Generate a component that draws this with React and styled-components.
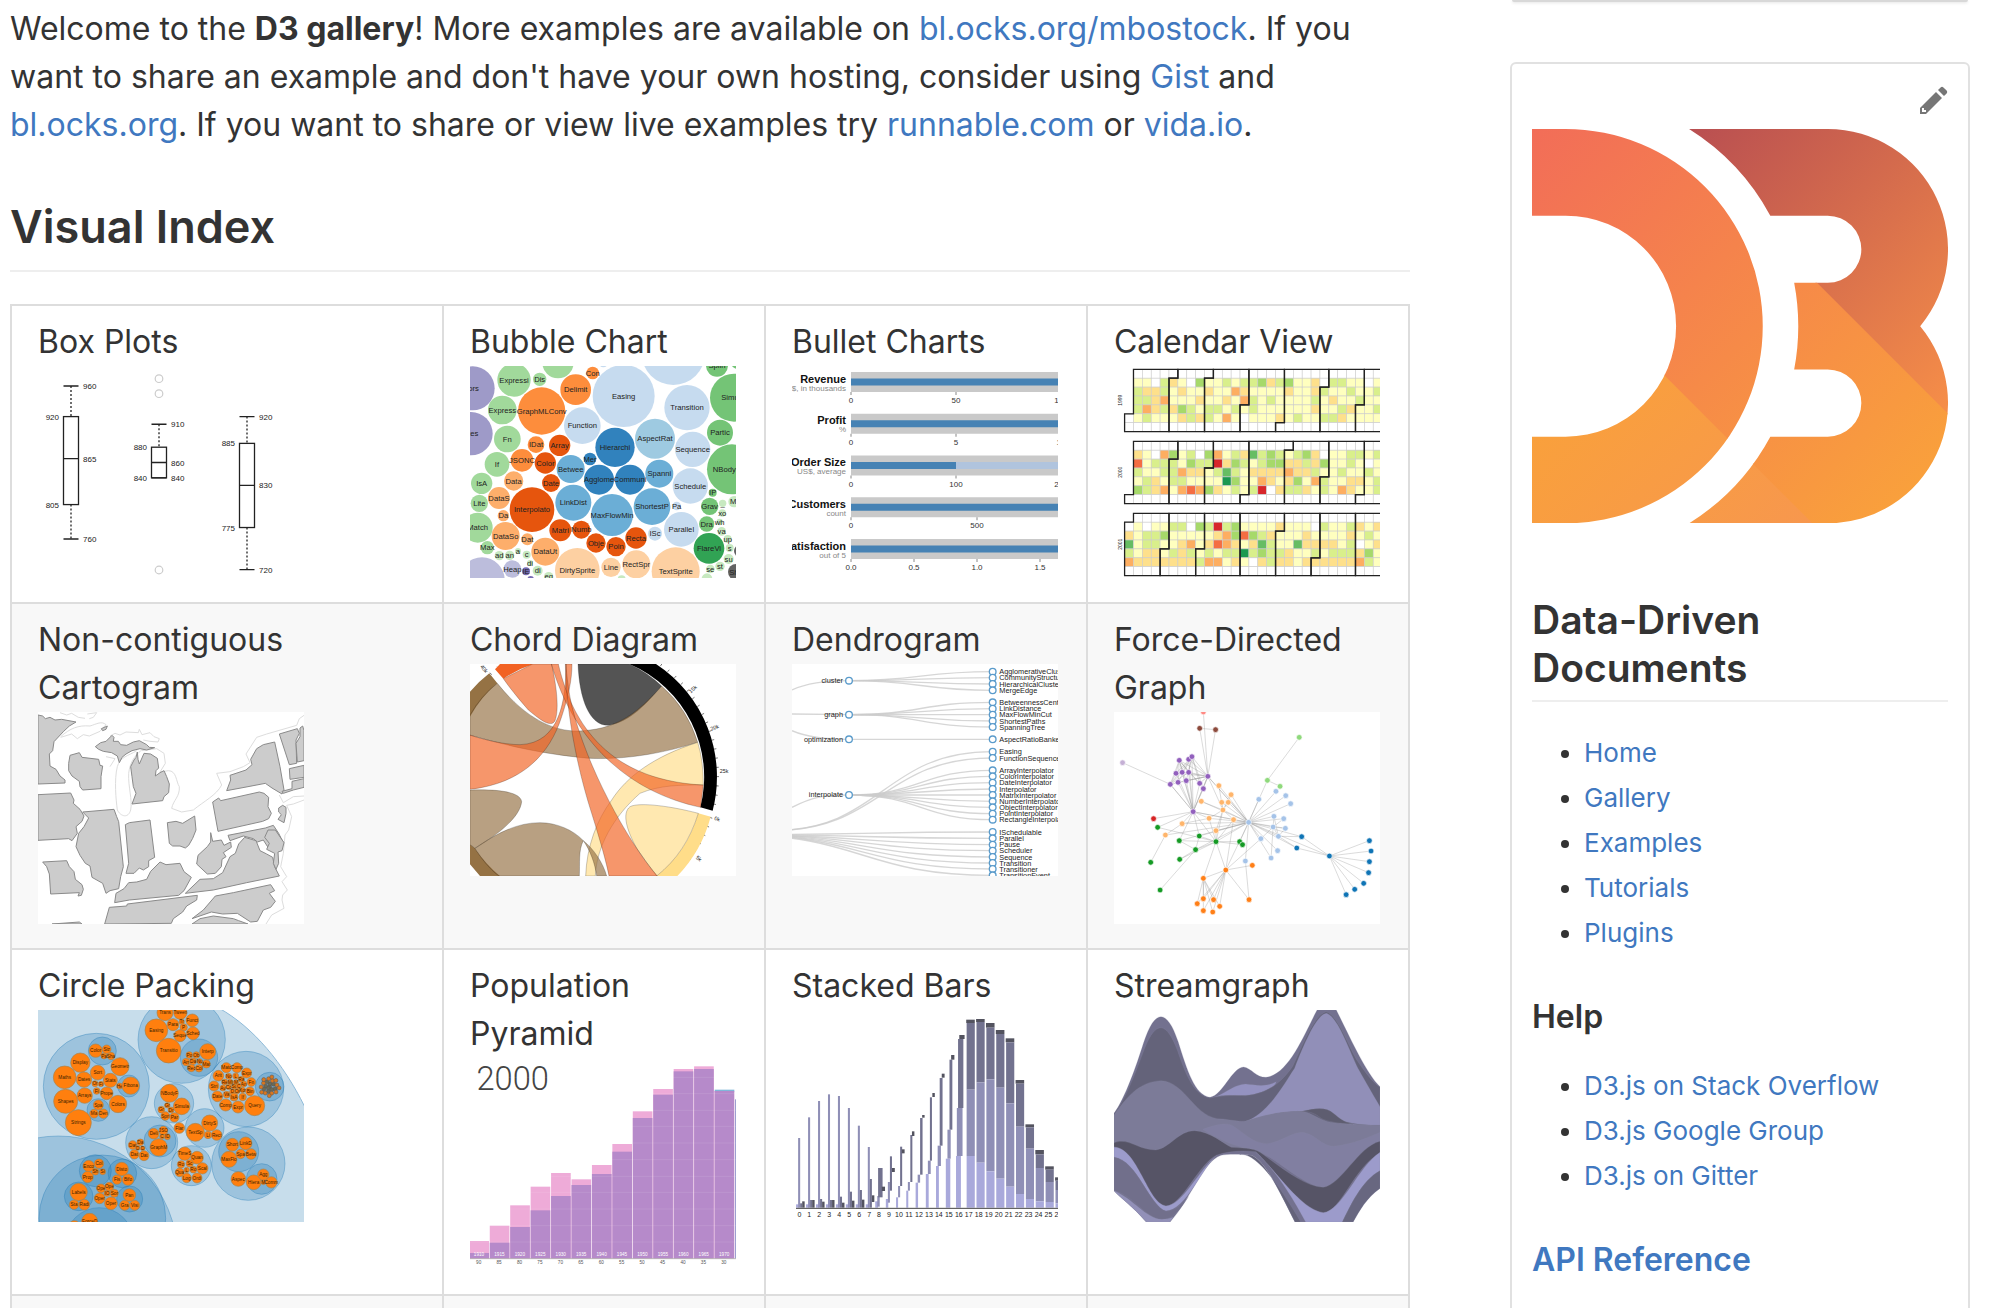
import React from "react";
import styled, { createGlobalStyle } from "styled-components";

const GlobalStyle = createGlobalStyle`
  *, *::before, *::after { box-sizing: border-box; }
  body {
    margin: 0;
    background: #fff;
    color: #333;
    font-family: Inter, "Liberation Sans", sans-serif;
    font-size: 32px;
    line-height: 48px;
  }
`;

/* ---------- layout ---------- */

const Page = styled.div`
  display: grid;
  grid-template-columns: minmax(0, 1fr) 460px;
  column-gap: 100px;
  height: 100vh;
  padding: 0 20px 0 10px;
  overflow: hidden;
`;

const Main = styled.main`
  padding-top: 5px;
`;

const Intro = styled.p`
  margin: 0 0 48px;
`;

const Link = styled.a`
  color: #4078c0;
  text-decoration: none;
  &:hover { text-decoration: underline; }
`;

const SectionTitle = styled.h2`
  margin: 0 0 32px;
  padding-bottom: 13px;
  border-bottom: 2px solid #eee;
  font-size: 45px;
  font-weight: 600;
  line-height: 60px;
`;

const Table = styled.table`
  width: 100%;
  table-layout: fixed;
  border-collapse: collapse;
`;

const Row = styled.tr`
  background: #fff;
  &:nth-child(even) { background: #f8f8f8; }
`;

const Cell = styled.td`
  padding: 12px 26px;
  border: 2px solid #ddd;
  vertical-align: top;
  height: 48px;
`;

const FirstCol = styled.col`
  width: 30.9%;
`;

const Entry = styled.div`
  width: 266px;
`;

const ThumbLink = styled.a`
  display: block;
  margin-bottom: 12px;
`;

const Thumb = styled.svg`
  display: block;
  width: 266px;
  height: 212px;
  background: #fff;
  overflow: hidden;
  font-family: "Liberation Sans", Arial, sans-serif;
`;

const Aside = styled.aside`
  display: flex;
  flex-direction: column;
  gap: 60px;
`;

const PagesBoxEdge = styled.div`
  flex: none;
  height: 2px;
  margin: 0 2px;
  background: #d8d8d8;
  border-radius: 0 0 4px 4px;
  box-shadow: 0 1px 3px rgba(0, 0, 0, 0.12);
`;

const SideBox = styled.section`
  flex: none;
  padding: 20px 20px 60px;
  border: 2px solid #e1e1e1;
  border-radius: 6px;
`;

const EditLink = styled.a`
  display: flex;
  justify-content: flex-end;
  margin-bottom: 13px;
  color: #767676;
`;

const Logo = styled.svg`
  display: block;
  width: 100%;
  margin-bottom: 73px;
`;

const SideTitle = styled.h2`
  margin: 0 0 28px;
  padding-bottom: 8px;
  border-bottom: 2px solid #eee;
  font-size: 39px;
  font-weight: 600;
  line-height: 48px;
`;

const SideHeading = styled.h3`
  margin: 38px 0 22px;
  font-size: 32px;
  font-weight: 600;
  line-height: 48px;
`;

const SideList = styled.ul`
  margin: 0;
  padding-left: 52px;
  font-size: 26px;
  line-height: 45px;
`;

/* ---------- thumbnails ---------- */

function BoxPlots() {
  const y = (v) => 20 + (960 - v) * 0.765;
  const boxes = [
    { x: 33, hi: 960, q3: 920, med: 865, q1: 805, lo: 760, out: [] },
    { x: 121, hi: 910, q3: 880, med: 860, q1: 840, lo: 840, out: [12.7, 27.7, 204] },
    { x: 209, hi: 920, q3: 885, med: 830, q1: 775, lo: 720, out: [] },
  ];
  return (
    <Thumb viewBox="0 0 266 212" fontSize="8" fill="#222">
      {boxes.map((b) => (
        <g key={b.x}>
          <g stroke="#222" strokeWidth="1.3" fill="none">
            <path d={`M${b.x},${y(b.hi)}V${y(b.q3)}M${b.x},${y(b.q1)}V${y(b.lo)}`} strokeDasharray="2 2" />
            <path d={`M${b.x - 7.5},${y(b.hi)}h15M${b.x - 7.5},${y(b.lo)}h15M${b.x - 7.5},${y(b.med)}h15`} />
            <rect x={b.x - 7.5} y={y(b.q3)} width="15" height={y(b.q1) - y(b.q3)} />
          </g>
          {b.out.map((o) => (
            <circle key={o} cx={b.x} cy={o} r="3.8" fill="none" stroke="#ccc" strokeWidth="1.2" />
          ))}
          {[b.hi, b.med, b.lo].map((v) => (
            <text key={v} x={b.x + 12} y={y(v) + 3}>{v}</text>
          ))}
          {[b.q3, b.q1].map((v) => (
            <text key={v} x={b.x - 12} y={y(v) + 3} textAnchor="end">{v}</text>
          ))}
        </g>
      ))}
    </Thumb>
  );
}

const BUBBLES = {
  "#9e9ac8": [[38, 85, 66, "lors"], [33, 221, 65, "utes"]],
  "#a1d99b": [[162, 60, 50, "Expressi"], [239, 58, 20, "Dis"], [294, 8, 47, ""], [127, 150, 43, "Express"], [142, 237, 40, "Fn"], [111, 313, 37, "If"], [65, 370, 32, "IsA"], [58, 430, 26, "Lite"], [53, 503, 45, "Match"], [82, 563, 20, "Max"]],
  "#c7e9c0": [[118, 587, 14, "ad"], [149, 586, 14, "an"], [174, 573, 9, "a"], [200, 584, 12, "c"], [210, 609, 9, "di"], [233, 632, 15, "di"], [266, 650, 14, "eq"], [485, 658, 12, ""], [822, 425, 17, "Mi"], [788, 430, 11, "_"], [787, 459, 11, "xo"], [779, 486, 10, "wh"], [785, 514, 13, "va"], [803, 537, 12, "up"], [809, 564, 12, "s"], [806, 597, 15, "su"], [780, 619, 14, "st"], [751, 627, 13, "se"], [741, 656, 16, ""]],
  "#fd8d3c": [[245, 153, 71, "GraphMLConv"], [347, 89, 46, "Delimit"], [398, 39, 19, "Con"], [228, 254, 25, "IDat"], [186, 301, 34, "JSONC"]],
  "#e6550d": [[299, 256, 32, "Array"], [256, 309, 32, "Color"], [273, 369, 27, "Date"], [216, 449, 67, "Interpolato"], [301, 511, 33, "Matri"], [364, 509, 27, "Numb"], [408, 549, 29, "Obje"], [468, 560, 29, "Poin"], [528, 534, 32, "Recta"]],
  "#fdae6b": [[161, 363, 29, "Data"], [117, 414, 33, "DataS"], [130, 467, 17, "Da"], [137, 528, 42, "DataSo"], [202, 538, 18, "Dat"], [256, 575, 42, "DataUt"]],
  "#fdd0a2": [[352, 631, 67, "DirtySprite"], [453, 622, 29, "Line"], [529, 613, 42, "RectSpr"], [647, 634, 72, "TextSprite"]],
  "#c6dbef": [[491, 108, 93, "Easing"], [640, -20, 95, ""], [430, 8, 14, ""], [367, 197, 55, "Function"], [681, 143, 68, "Transition"], [698, 268, 53, "Sequence"], [691, 378, 53, "Schedule"], [650, 438, 13, "Pa"], [664, 508, 52, "Parallel"], [585, 521, 21, "ISc"]],
  "#9ecae1": [[585, 236, 60, "AspectRat"]],
  "#3182bd": [[465, 262, 59, "Hierarchi"], [390, 297, 19, "Mer"], [417, 359, 45, "Agglome"], [510, 359, 45, "Communi"]],
  "#6baed6": [[332, 327, 42, "Betwee"], [340, 428, 54, "LinkDist"], [456, 465, 63, "MaxFlowMin"], [598, 341, 42, "Spanni"], [576, 440, 55, "ShortestP"]],
  "#74c476": [[771, 17, 33, "Splin"], [822, 113, 72, "Simulat"], [830, 10, 16, ""], [780, 218, 39, "Partic"], [816, 328, 75, "NBodyForc"], [758, 398, 12, "IP"], [749, 439, 26, "Grav"], [740, 492, 23, "Dra"]],
  "#31a354": [[747, 565, 46, "FlareVi"]],
  "#bcbddc": [[66, 660, 68, ""], [157, 627, 26, "Heap"]],
  "#756bb1": [[198, 634, 12, "IE"], [212, 658, 10, ""]],
  "#636363": [[840, 573, 18, ""], [828, 636, 24, "Sha"]],
};

function BubbleChart() {
  return (
    <Thumb viewBox="30 18 798 636" fontSize="23" textAnchor="middle">
      {Object.entries(BUBBLES).map(([color, list]) =>
        list.map(([x, y, r, label]) => (
          <g key={`${x},${y}`}>
            <circle cx={x} cy={y} r={r} fill={color} />
            {label && <text x={x} y={y + 8} fill="#222">{label}</text>}
          </g>
        ))
      )}
    </Thumb>
  );
}

function BulletCharts() {
  const rows = [
    { title: "Revenue", sub: "US$, in thousands", ticks: [["0", 59], ["50", 164], ["100", 269]] },
    { title: "Profit", sub: "%", ticks: [["0", 59], ["5", 164], ["10", 269]] },
    { title: "Order Size", sub: "US$, average", split: 164, ticks: [["0", 59], ["100", 164], ["200", 269]] },
    { title: "Customers", sub: "count", ticks: [["0", 59], ["500", 185]] },
    { title: "Satisfaction", sub: "out of 5", ticks: [["0.0", 59], ["0.5", 122], ["1.0", 185], ["1.5", 248]] },
  ];
  return (
    <Thumb viewBox="0 0 266 212" fontSize="8">
      {rows.map((r, i) => (
        <g key={r.title} transform={`translate(0 ${6 + i * 41.75})`}>
          <rect x="59" width="210" height="20" fill="#c9c9c9" />
          <rect x="59" y="6.5" width="210" height="7" fill={r.split ? "#b0c4de" : "#4682b4"} />
          {r.split && <rect x="59" y="6.5" width={r.split - 59} height="7" fill="#4682b4" />}
          <text x="54" y="10.5" fontSize="11" fontWeight="bold" textAnchor="end" fill="#111">{r.title}</text>
          <text x="54" y="18.5" textAnchor="end" fill="#888">{r.sub}</text>
          {r.ticks.map(([t, x]) => (
            <g key={t}>
              <path d={`M${x},20v3`} stroke="#888" />
              <text x={x} y="31" textAnchor="middle" fill="#333">{t}</text>
            </g>
          ))}
        </g>
      ))}
    </Thumb>
  );
}

const HEAT = { y: "#ffffbf", l: "#d9ef8b", g: "#a6d96a", G: "#66bd63", D: "#1a9850", o: "#fee08b", f: "#fdae61", r: "#f46d43", R: "#d7262a", w: "#fff" };

const CALENDAR = [
  { year: 1999, top: 3.3, days: ["-yywloywgyylyllgolgyyowllyywy", "-loolyoyyoyyfoyyyyoyyolyylyyl", "-llofyyyoyyoyflylyyyylyoyylyy", "-lfologlyllylylyyyyyyoyyloyyl", "wylyyyololyfywyyyoylyylloyyyy"] },
  { year: 2000, top: 75.3, days: ["-oywfgylwgfyloGlglylgowyyllyl", "-rylllygllRoglylggoologyylywy", "-lyyllfooylGlyoooofoolyylyyly", "-yloyllyyyyDgyyfoyogyflyyooyl", "-glofyfrfgoylylRwolloylyfoyyl"] },
  { year: 2001, top: 147.3, days: ["wywyyllwglRlgyyyyoyyywlyyloyo", "oyllgyyyyyofgrgloyyyoyyyyoyly", "GyllyyofyorfoyoGlyyGooooylwyo", "lyooylolylyllDlglloyylylllogy", "fooooooolffyoywolooyoooooofly"] },
];

function monthOutline(year, month, w, h) {
  const jan1 = new Date(Date.UTC(year, 0, 1));
  const place = (d) => {
    const n = Math.round((d - jan1) / 864e5) + jan1.getUTCDay();
    return [Math.floor(n / 7), n % 7];
  };
  const [w0, d0] = place(new Date(Date.UTC(year, month, 1)));
  const [w1, d1] = place(new Date(Date.UTC(year, month + 1, 0)));
  return `M${(w0 + 1) * w},${d0 * h}H${w0 * w}V${7 * h}H${w1 * w}V${(d1 + 1) * h}H${(w1 + 1) * w}V0H${(w0 + 1) * w}Z`;
}

function CalendarView() {
  const w = 8.88;
  const h = 8.9;
  return (
    <Thumb viewBox="0 0 266 212">
      {CALENDAR.map(({ year, top, days }) => {
        const first = new Date(Date.UTC(year, 0, 1)).getUTCDay();
        return (
          <g key={year} transform={`translate(10.6 ${top})`}>
            {Array.from({ length: 29 * 7 }, (_, n) => {
              const c = Math.floor(n / 7);
              const d = n % 7;
              if (n < first) return null;
              const code = d > 0 && d < 6 ? days[d - 1][c] : "w";
              return <rect key={n} x={c * w} y={d * h} width={w} height={h} fill={HEAT[code] || "#fff"} stroke="#ccc" strokeWidth="0.6" />;
            })}
            {[0, 1, 2, 3, 4, 5, 6].map((m) => (
              <path key={m} d={monthOutline(year, m, w, h)} fill="none" stroke="#222" strokeWidth="1.3" />
            ))}
            <text transform="translate(-3 31) rotate(-90)" fontSize="5" textAnchor="middle" fill="#222">{year}</text>
          </g>
        );
      })}
    </Thumb>
  );
}

const COASTS = [
  "M180,338L200,345L215,340L235,352L255,355M262,342L290,338L280,352L268,356",
  "M182,410C210,385 235,375 270,378C290,372 305,362 318,374L300,394L268,408L250,404L232,416L215,402L182,412",
  "M330,408L345,400L360,405L378,396L415,398L418,388L426,404L450,398L462,410L478,416L474,426L450,424L430,420",
  "M318,470L345,476L330,500M410,452C385,468 360,470 352,500C342,540 348,600 352,630C362,650 385,656 392,630C398,600 384,560 386,520C390,490 400,470 425,450",
  "M425,452L470,446L492,460L496,490L480,516L505,512C530,512 528,545 538,560C540,590 520,600 515,625L545,636L580,630C610,605 650,585 665,555L650,520L690,515L730,500L750,488L738,462L770,412L800,402L890,376L898,356L912,346",
  "M912,600L880,612L860,616L875,650L866,690L855,705L850,760L842,800L860,830L846,845L862,870L848,885L846,900L852,925L815,945L798,972",
  "M912,588L880,590L850,608L838,585",
];

const STATES = [
  "M114,345L128,348L136,356L150,352L165,360L185,358L228,366L208,378L190,395L162,425L158,452L148,462L150,498L168,508L180,528L195,540L195,549L114,552Z",
  "M114,584L212,579L222,600L220,610L240,628L252,648L246,664L228,680L232,700L216,722L206,716L114,721Z",
  "M210,466L238,458L246,472L296,478L300,496L308,498L303,530L303,566L248,570L240,560L238,544L216,528L206,512L206,490Z",
  "M286,440L302,428L318,424L336,406L342,412L340,424L355,424L362,434L380,436L400,426L418,422L440,434L448,442L464,443L440,450L420,446L396,452L378,462L366,472L358,488L352,468L335,458L310,454L296,448Z",
  "M304,386L322,378L318,388L308,392Z",
  "M412,456L408,472L402,480L392,500L396,530L400,560L408,580L396,612L488,602L492,590L506,578L508,552L500,530L492,512L480,518L466,528L468,512L476,504L472,475L452,462L432,460L418,492L414,478Z",
  "M248,636L342,628L350,650L356,665L370,800L362,830L356,866L330,872L318,880L308,850L276,832L270,798L256,790L240,766L228,740L236,700L252,680L266,654Z",
  "M376,674L388,668L450,660L464,772L446,782L446,800L430,810L418,804L402,820L378,820L386,790Z",
  "M502,668L528,664L548,670L584,648L588,690L578,715L566,736L556,744L540,738L518,738L508,730Z",
  "M128,786L200,782L208,800L222,815L226,838L246,854L250,868L244,886L234,888L238,878L152,882L148,822L140,800Z",
  "M344,908L348,880L372,866L386,848L410,846L440,838L452,814L480,786L498,794L540,790L552,815L574,832L552,872L536,886L388,900Z",
  "M314,972L328,922L380,918L382,912L592,886L590,900L560,918L548,936L520,956L514,970Z",
  "M156,972L238,966L246,972Z",
  "M690,526L738,510L756,494L752,478L770,446L790,434L824,426L840,500L852,570L846,582L816,564L796,550L744,560L680,572L692,540Z",
  "M838,402L892,386L898,400L888,420L890,490L868,494Z",
  "M900,384L908,378L912,392V482L892,486L888,430L900,410Z",
  "M868,506L912,496V532L870,538Z",
  "M876,544L912,536V562L880,570L850,580L846,574L876,566Z",
  "M638,606L656,594L662,602L778,576L792,580L806,592L804,620L814,640L806,656L788,664L654,694Z",
  "M836,624L848,616L858,622L858,640L852,668L834,658L844,644L836,636Z",
  "M632,698L638,724L664,720L672,736L692,726L694,742L670,758L678,770L666,778L664,800L646,820L622,822L590,792L594,766L622,740L632,726Z",
  "M684,706L796,684L820,676L836,700L850,728L822,738L804,742L790,720L772,726L760,716L730,708L690,722Z",
  "M556,880L600,838L640,836L668,818L690,770L706,760L716,732L734,712L768,722L780,752L800,762L818,772L824,800L838,828L740,848L640,870Z",
  "M804,690L826,690L852,728L846,752L834,756L836,790L828,808L820,790L824,760L800,748L808,730L794,712Z",
  "M576,956L610,930L646,888L700,878L812,854L824,872L808,880L826,904L812,922L790,930L772,964L752,966L712,940L668,942L634,936Z",
  "M576,972L600,956L640,948L700,956L716,962L744,972Z",
];

function Cartogram() {
  return (
    <Thumb viewBox="114 336 798 636" strokeLinejoin="round">
      <g fill="none" stroke="#ddd" strokeWidth="3">
        {COASTS.map((d) => <path key={d} d={d} />)}
      </g>
      <g fill="#ccc" stroke="#8a8a8a" strokeWidth="3">
        {STATES.map((d) => <path key={d} d={d} />)}
      </g>
    </Thumb>
  );
}

function ChordDiagram() {
  const ticks = [];
  for (let a = -62; a <= 14; a += 3.9) ticks.push(a);
  for (let a = 18; a <= 50; a += 3.9) ticks.push(a);
  for (let a = 205; a <= 240; a += 3.9) ticks.push(a);
  const at = (r, a) => `${424 + r * Math.cos((a * Math.PI) / 180)},${527 + r * Math.sin((a * Math.PI) / 180)}`;
  const labels = [["15k", 762, 272, -40], ["20k", 826, 388, -20], ["25k", 852, 520, 0], ["0k", 830, 662, 18], ["5k", 773, 780, 38], ["40k", 128, 210, 50]];
  return (
    <Thumb viewBox="90 192 798 636">
      <path d={ticks.map((a) => `M${at(405, a)}L${at(413, a)}`).join("")} stroke="#333" strokeWidth="2" />
      {labels.map(([t, x, y, r]) => (
        <text key={t} transform={`translate(${x} ${y}) rotate(${r})`} fontSize="16" textAnchor="middle" fill="#222">{t}</text>
      ))}
      <path d="M568,192H648A405,405 0 0 1 818,632L781,622A368,368 0 0 0 568,192Z" fill="#000" />
      <path d="M775,640L812,650A405,405 0 0 1 712,828H650A368,368 0 0 0 775,640Z" fill="#ffdd89" />
      <path d="M148,220L172,250A368,368 0 0 0 90,350V275A405,405 0 0 1 148,220Z" fill="#957244" />
      <path d="M90,733L105,745A368,368 0 0 0 180,828H120L90,793Z" fill="#957244" />
      <path d="M180,192H280A368,368 0 0 0 190,236L165,208Z" fill="#f26223" />
      <g stroke="#000" strokeOpacity="0.25" strokeWidth="2.5" fillOpacity="0.67">
        <path d="M414,192C418,300 450,378 505,376C570,366 620,310 665,258A368,368 0 0 0 568,192Z" fill="#000" />
        <path d="M172,250C260,360 350,400 430,392C540,385 600,330 665,258A368,368 0 0 1 773,427C640,470 500,485 400,470C270,455 180,430 90,406V345Q125,285 172,250Z" fill="#957244" />
        <path d="M90,570C150,568 240,570 245,605C240,650 180,700 105,745L90,733Z" fill="#957244" />
        <path d="M105,745C170,700 230,668 300,668C350,668 400,690 430,722C415,750 420,790 418,828H177C150,810 120,770 105,745Z" fill="#957244" />
        <path d="M773,427C640,470 560,530 515,600C470,660 440,740 437,828H466C470,740 520,650 600,580C660,555 720,555 790,555Q790,480 773,427Z" fill="#ffdd89" />
        <path d="M775,640C700,620 600,605 570,620C545,640 560,690 590,745Q620,790 650,828C710,780 750,720 775,640Z" fill="#ffdd89" />
        <path d="M430,722C460,745 490,790 500,828H470C465,790 450,750 430,722Z" fill="#957244" />
        <path d="M190,236L278,192H335C350,260 358,330 345,362C332,388 290,350 265,330C235,295 210,265 190,236Z" fill="#f26223" />
        <path d="M378,192C378,300 360,430 240,434C190,434 130,418 90,405V568C250,550 330,460 365,350C385,290 396,240 396,192Z" fill="#f26223" />
        <path d="M355,192C390,340 480,540 790,555L782,622C560,575 400,420 334,192Z" fill="#f26223" />
        <path d="M376,192C378,330 410,500 455,640C480,720 500,790 507,828H652C560,720 440,500 396,320C385,270 380,230 378,192Z" fill="#f26223" />
      </g>
    </Thumb>
  );
}

const TREE = [
  { name: "cluster", y: 50, leaves: [["AgglomerativeCluster", 23], ["CommunityStructure", 41], ["HierarchicalCluster", 60], ["MergeEdge", 79]] },
  { name: "graph", y: 152, leaves: [["BetweennessCentrality", 115], ["LinkDistance", 134], ["MaxFlowMinCut", 152], ["ShortestPaths", 171], ["SpanningTree", 189]] },
  { name: "optimization", y: 226, leaves: [["AspectRatioBanker", 226]] },
  { name: "", x: -60, y: 500, leaves: [["Easing", 263], ["FunctionSequence", 282]] },
  { name: "interpolate", y: 393, leaves: [["ArrayInterpolator", 319], ["ColorInterpolator", 337], ["DateInterpolator", 356], ["Interpolator", 375], ["MatrixInterpolator", 393], ["NumberInterpolator", 412], ["ObjectInterpolator", 430], ["PointInterpolator", 449], ["RectangleInterpolator", 467]] },
  { name: "", x: -180, y: 512, leaves: [["ISchedulable", 504], ["Parallel", 523], ["Pause", 542], ["Scheduler", 560], ["Sequence", 579], ["Transition", 597], ["Transitioner", 615], ["TransitionEvent", 634]] },
];

function Dendrogram() {
  return (
    <Thumb viewBox="0 0 798 636" fontSize="22">
      <g fill="none" stroke="#ccc" strokeWidth="4" strokeOpacity="0.8">
        {TREE.flatMap((n) => {
          const x = n.x ?? 171;
          const mid = (x + 602) / 2;
          return n.leaves.map(([name, y]) => <path key={name} d={`M${x},${n.y}C${mid},${n.y} ${mid},${y} 602,${y}`} />);
        })}
        <path d="M0,78Q60,50 171,50M0,150L171,152M0,200Q60,226 171,226M0,430C60,400 90,393 171,393" />
      </g>
      {TREE.filter((n) => n.name).map((n) => (
        <g key={n.name}>
          <circle cx="171" cy={n.y} r="10" fill="#fff" stroke="#5a9bcb" strokeWidth="4" />
          <text x="153" y={n.y + 7} textAnchor="end" fill="#222">{n.name}</text>
        </g>
      ))}
      {TREE.flatMap((n) => n.leaves).map(([name, y]) => (
        <g key={name}>
          <circle cx="602" cy={y} r="10" fill="#fff" stroke="#5a9bcb" strokeWidth="4" />
          <text x="622" y={y + 8} fill="#222">{name}</text>
        </g>
      ))}
    </Thumb>
  );
}

const NODES = {
  "#ff8a84": [[1037, 336]],
  "#8c4a3c": [[1028, 385], [1067, 389]],
  "#c5b0d5": [[839, 488]],
  "#9260bd": [[978, 481], [1001, 478], [1009, 470], [970, 520], [985, 517], [1001, 517], [956, 553], [975, 547], [995, 542], [1028, 550], [1037, 566], [1048, 529], [1012, 635]],
  "#8fd97c": [[1272, 412], [1194, 541], [1225, 559]],
  "#ffb56b": [[1075, 557], [1105, 584], [1032, 604], [1082, 607], [1098, 607], [1085, 630], [1051, 655], [1111, 659], [985, 671], [1068, 692], [944, 705]],
  "#a5c3e8": [[1215, 574], [1239, 587], [1251, 611], [1173, 598], [1210, 649], [1234, 656], [1148, 667], [1208, 681], [1238, 685], [1221, 709], [1178, 716], [1219, 752], [1203, 774], [1140, 783]],
  "#d62324": [[915, 656]],
  "#159a24": [[925, 682], [1027, 708], [978, 722], [1068, 725], [1126, 725], [1133, 734], [1018, 749], [979, 778], [908, 787], [931, 870]],
  "#0f74b5": [[1278, 710], [1266, 744], [1346, 768], [1444, 722], [1448, 753], [1444, 785], [1442, 818], [1430, 850], [1408, 868], [1387, 884]],
  "#ff7f17": [[1157, 796], [1092, 810], [1037, 835], [1037, 896], [1062, 899], [1022, 911], [1077, 919], [1037, 932], [1060, 936], [1149, 899]],
};

const HUBS = [
  [[1148, 667], [...NODES["#a5c3e8"], ...NODES["#ffb56b"], [1194, 541], [1278, 710], [1266, 744], [1346, 768], [1068, 725], [1027, 708], [1126, 725], [978, 722], [1092, 810], [1048, 529], [1018, 749], [1012, 635]]],
  [[1346, 768], NODES["#0f74b5"]],
  [[1092, 810], [...NODES["#ff7f17"], [1068, 725], [1178, 716], [1111, 659]]],
  [[1037, 835], [[1037, 896], [1062, 899], [1022, 911], [1077, 919], [1037, 932], [1060, 936], [1068, 725]]],
  [[1048, 529], [...NODES["#9260bd"], [1037, 336], [1028, 385], [1067, 389], [1085, 630], [1148, 667]]],
  [[1012, 635], [...NODES["#9260bd"], [915, 656], [925, 682], [985, 671], [1027, 708], [1051, 655], [1068, 725], [978, 722], [1111, 659]]],
  [[1009, 470], NODES["#9260bd"].slice(3, 11)],
  [[978, 481], NODES["#9260bd"].slice(3, 11)],
  [[956, 553], [[839, 488], [970, 520], [985, 517], [1001, 517], [1012, 635]]],
  [[1068, 725], [...NODES["#159a24"].slice(0, 8), [1051, 655], [1068, 692], [1111, 659], [1085, 630]]],
  [[1085, 630], [[1075, 557], [1105, 584], [1082, 607], [1098, 607], [1051, 655], [1111, 659], [1068, 692], [1032, 604]]],
  [[1208, 681], [[1210, 649], [1234, 656], [1238, 685], [1221, 709], [1178, 716], [1203, 774]]],
  [[1221, 709], [[1278, 710], [1266, 744], [1210, 649], [1238, 685]]],
  [[1194, 541], [[1272, 412], [1225, 559]]],
  [[1018, 749], [[931, 870], [979, 778], [978, 722], [1027, 708]]],
  [[985, 671], [[944, 705], [1051, 655]]],
  [[944, 705], [[908, 787]]],
  [[1028, 385], [[1067, 389]]],
  [[1140, 783], [[1149, 899]]],
];

function ForceGraph() {
  const at = ([x, y]) => [(x - 818) * 1.224, y - 336];
  return (
    <Thumb viewBox="0 0 798 636">
      <path
        d={HUBS.map(([hub, ends]) => ends.map((e) => `M${at(hub)}L${at(e)}`).join("")).join("")}
        stroke="#999" strokeOpacity="0.42" strokeWidth="2.5" fill="none"
      />
      {Object.entries(NODES).map(([color, pts]) =>
        pts.map((p) => {
          const [x, y] = at(p);
          return <circle key={`${x},${y}`} cx={x} cy={y} r="8.5" fill={color} stroke="#fff" strokeWidth="2" />;
        })
      )}
    </Thumb>
  );
}

const PACKS = [
  [289, 439, 159], [545, 299, 131], [738, 447, 113], [522, 490, 59], [614, 564, 58], [455, 608, 78], [745, 671, 110], [574, 677, 60],
  [175, 945, 357], [307, 835, 190], [307, 333, 42], [386, 438, 33], [295, 510, 34], [597, 353, 56], [809, 440, 43], [480, 603, 48],
  [716, 635, 60], [785, 717, 46], [286, 692, 48], [367, 700, 43], [236, 769, 43], [389, 777, 39], [298, 905, 102],
];

const LEAVES = [
  [495, 218, 24, "Trans"], [541, 218, 20, "Tween"], [577, 241, 19, "Funct"], [519, 254, 18, "Para"], [469, 271, 34, "Easing"], [545, 245, 8, "Tr"], [551, 262, 11, "P"], [540, 287, 18, "Seque"], [579, 280, 19, "Sched"], [506, 332, 37, "Transitio"],
  [623, 335, 24, "Interp"], [568, 345, 10, "Po"], [589, 345, 10, "Ob"], [558, 366, 11, "Arr"], [579, 364, 10, "Da"], [599, 364, 8, "Nu"], [619, 372, 12, "Mat"], [574, 384, 11, "Rec"], [597, 385, 11, "Col"],
  [287, 332, 20, "Color"], [320, 328, 13, "Siz"], [312, 348, 9, "Pa"], [333, 348, 11, "Sha"], [241, 368, 29, "Display"], [194, 412, 34, "Maths"], [360, 380, 27, "Geometr"], [293, 398, 22, "Sort"], [252, 419, 23, "Dates"], [331, 421, 21, "Stats"], [285, 431, 9, "Or"], [303, 432, 8, "Fi"], [359, 438, 9, "He"], [392, 437, 26, "Fibona"], [290, 453, 10, "Fi"], [320, 460, 19, "Prope"], [254, 467, 23, "Arrays"], [197, 484, 36, "Shapes"], [354, 492, 26, "Colors"], [295, 495, 15, "Spa"], [282, 521, 13, "Ma"], [310, 521, 14, "Den"], [235, 548, 39, "Strings"],
  [679, 383, 15, "Matc"], [711, 383, 15, "Comp"], [655, 407, 16, "Arit"], [740, 399, 15, "Expr"], [686, 409, 9, "No"], [707, 408, 9, "L"], [724, 418, 9, "Ra"], [754, 426, 13, "Fn"], [642, 438, 15, "Stri"], [674, 426, 9, "Re"], [691, 426, 8, "Mi"], [708, 427, 8, "M"], [731, 432, 9, "An"], [669, 444, 9, "Av"], [686, 441, 8, "Co"], [703, 440, 8, "Su"], [716, 438, 8, "C"], [697, 455, 8, "D"], [712, 453, 8, "Or"], [728, 450, 8, "Xor"], [750, 454, 13, "Bin"], [652, 469, 16, "Date"], [680, 464, 10, "Va"], [702, 471, 12, "IsA"], [728, 471, 11, "If"], [677, 495, 18, "Comp"], [714, 501, 18, "Expr"], [764, 497, 30, "Query"],
  [508, 460, 27, "NBodyF"], [545, 499, 25, "Simula"], [484, 509, 10, "Gr"], [502, 496, 8, "Gr"], [513, 510, 9, "Dr"], [496, 528, 13, "Spri"], [523, 532, 14, "Par"], [538, 564, 16, "Flar"],
  [629, 549, 24, "DirtyS"], [586, 577, 27, "TextSp"], [624, 585, 11, "Li"], [650, 585, 16, "Rect"],
  [461, 581, 16, "Deli"], [490, 572, 13, "JSO"], [486, 590, 7, "C"], [502, 590, 9, "ID"], [476, 622, 26, "GraphM"], [398, 615, 13, "Dat"], [421, 607, 10, "Da"], [413, 624, 7, "D"], [428, 625, 7, "D"], [403, 643, 14, "Dat"], [432, 647, 15, "Dat"],
  [697, 614, 19, "Short"], [737, 610, 19, "LinkD"], [687, 658, 24, "MaxFlo"], [722, 642, 14, "Spa"], [753, 642, 16, "Betw"], [715, 717, 22, "Aspec"], [790, 704, 17, "Agg"], [761, 727, 22, "Hiera"], [790, 727, 7, "M"], [814, 727, 17, "Comm"],
  [554, 641, 20, "TimeS"], [591, 653, 19, "Quan"], [543, 673, 11, "Ro"], [569, 670, 11, "Sc"], [607, 685, 17, "Scal"], [539, 697, 13, "Qua"], [560, 690, 8, "L"], [580, 689, 10, "Ro"], [560, 714, 14, "Log"], [591, 714, 15, "Ordi"],
  [266, 678, 17, "Enco"], [297, 671, 14, "Col"], [263, 711, 17, "Prop"], [286, 695, 10, "Sh"], [308, 695, 9, "Si"], [365, 687, 20, "Disto"], [351, 719, 14, "Fis"], [384, 719, 17, "Bifo"], [236, 756, 26, "Labels"], [222, 794, 14, "Sta"], [253, 794, 16, "Radi"], [303, 745, 13, "Ope"], [328, 740, 13, "Ope"], [321, 760, 9, "IO"], [343, 760, 12, "Sor"], [299, 775, 16, "Oper"], [333, 790, 19, "Oper"], [388, 765, 19, "Pan"], [374, 796, 15, "Gra"], [404, 796, 15, "Visi"], [269, 844, 24, "ForceD"], [223, 860, 18, ""],
];

function CirclePacking() {
  return (
    <Thumb viewBox="114 210 798 636" fontSize="14" textAnchor="middle">
      <path d="M110,205H658C760,262 850,370 914,500V850H110Z" fill="#c7ddeb" stroke="#8fbbd9" strokeWidth="3" />
      {PACKS.map(([x, y, r], i) => (
        <circle key={i} cx={x} cy={y} r={r} fill="#1f77b4" fillOpacity="0.25" stroke="#1f77b4" strokeOpacity="0.35" strokeWidth="3" />
      ))}
      {Array.from({ length: 24 }, (_, i) => {
        const a = i * 2.4;
        const r = 6.2 * Math.sqrt(i);
        return <circle key={i} cx={809 + r * Math.cos(a)} cy={440 + r * Math.sin(a)} r={6} fill={i < 10 ? "#6b6a55" : "#d9771f"} stroke="#555" strokeWidth="1.5" />;
      })}
      {LEAVES.map(([x, y, r, label]) => (
        <g key={`${x},${y}`}>
          <circle cx={x} cy={y} r={r} fill="#ff7f0e" stroke="#a8844f" strokeWidth="2" />
          {label && <text x={x} y={y + 5} fill="#3a1d00">{label}</text>}
        </g>
      ))}
    </Thumb>
  );
}

function PopulationPyramid() {
  const pink = [903, 857, 796, 740, 699, 718, 675, 612, 514, 447, 387, 379, 453];
  const purple = [939, 908, 861, 811, 768, 735, 702, 635, 534, 464, 394, 387, 453];
  return (
    <Thumb viewBox="90 354 798 636" textAnchor="middle" fontSize="14">
      <text x="218" y="450" fontSize="98" fontWeight="300" fill="#444" fontFamily="Roboto, sans-serif">2000</text>
      <rect x="824" y="449" width="59" height="6" fill="#7fb7d9" />
      <rect x="885" y="478" width="4" height="477" fill="#9d9fd0" />
      {pink.map((top, i) => {
        const x = 88 + i * 61.3;
        return (
          <g key={i}>
            <rect x={x} y={top} width="59" height={955 - top} fill="#eeabd8" />
            <rect x={x} y={purple[i]} width="59" height={955 - purple[i]} fill="#b68aca" />
            <text x={x + 29} y="949" fill="#fff">{1910 + i * 5}</text>
            <text x={x + 28} y="971" fill="#555">{90 - i * 5}</text>
          </g>
        );
      })}
      <path d={[412, 461, 511, 559, 609, 659, 709, 757, 807, 857, 906].map((y) => `M90,${y}H888`).join("")} stroke="#fff" strokeOpacity="0.15" strokeWidth="2" />
      <path d="M90,956H888" stroke="#999" strokeWidth="2" />
    </Thumb>
  );
}

/* [x, width, top, bottom] per layer, in the order lavender, periwinkle, slate, cap */
const LAYER_COLORS = ["#a9a9db", "#8f8fb6", "#72728f", "#53535f"];
const GROUPED = [
  [[258, 7, 784, 803], [263, 6, 768, 800], [265, 11, 684, 772], [274, 8, 740, 753]],
  [[284, 6, 777, 803], [289, 5, 726, 788], [294, 5, 649, 752], [299, 7, 684, 696]],
  [[309, 5, 772, 803], [314, 5, 738, 772], [319, 5, 620, 738], [323, 7, 628, 640]],
  [[334, 5, 752, 803], [338, 5, 726, 752], [344, 5, 585, 726], [348, 6, 574, 588]],
  [[357, 6, 728, 803], [362, 6, 704, 728], [368, 6, 534, 704], [373, 6, 525, 533]],
  [[382, 7, 702, 803], [387, 7, 662, 702], [392, 5, 472, 662], [398, 6, 459, 471]],
  [[407, 7, 678, 803], [411, 8, 617, 678], [416, 7, 414, 617], [421, 7, 401, 413]],
  [[431, 11, 656, 803], [435, 8, 569, 656], [440, 7, 359, 569], [444, 8, 345, 359]],
  [[456, 12, 648, 803], [458, 14, 504, 648], [461, 13, 297, 504], [464, 13, 285, 297]],
];
const SPIKES = [594, 532, 483, 463, 468, 504, 557, 621];
const STACKED = [
  [239, 249, 449, 648], [237, 246, 427, 668], [249, 263, 418, 694], [270, 282, 443, 716], [295, 307, 490, 740],
  [420, 431, 560, 762], [553, 562, 626, 777], [630, 643, 684, 784], [679, 689, 726, 786], [712, 722, 750, 790],
];

function StackedBars() {
  const k = 1.224;
  const bar = (key, x, w, top, bottom, fill) => (
    <rect key={key} x={(x - 54) * k} y={top - 210} width={w * k} height={bottom - top} fill={fill} />
  );
  return (
    <Thumb viewBox="0 0 798 636" fontSize="21" textAnchor="middle">
      {SPIKES.map((top, i) => {
        const x = 70 + i * 24.4;
        return [
          bar(`a${i}`, x - 6, 6, 793, 803, LAYER_COLORS[0]),
          bar(`b${i}`, x - 1, 5, top, 803, LAYER_COLORS[1]),
          bar(`c${i}`, x + 4, 5, [790, 780, 777, 780, 770, 755, 750, 717][i], 803, LAYER_COLORS[2]),
          bar(`d${i}`, x + 9, 6, [784, 780, 785, 780, 788, 782, 779, 766][i], i === 7 ? 786 : 803, LAYER_COLORS[3]),
        ];
      })}
      {GROUPED.map((layers, i) => layers.map(([x, w, t, b], j) => bar(`${i}-${j}`, x, w, t, b, LAYER_COLORS[j])))}
      {STACKED.map(([cap, slate, peri, lav], i) => {
        const x = 481 + i * 24.2;
        return [
          bar(`s${i}`, x, 21, cap, slate, LAYER_COLORS[3]),
          bar(`t${i}`, x + 1, 20, slate, peri, LAYER_COLORS[2]),
          bar(`u${i}`, x + 1, 20, peri, lav, LAYER_COLORS[1]),
          bar(`v${i}`, x + 1, 20, lav, 803, LAYER_COLORS[0]),
        ];
      })}
      <path d="M12,595H798" stroke="#444" strokeWidth="3" />
      {Array.from({ length: 27 }, (_, i) => (
        <text key={i} x={22 + i * 29.9} y="621" fill="#222">{i}</text>
      ))}
    </Thumb>
  );
}

const STREAMS = [
  ["#73718f", "M843,520C870,475 897,380 915,310C930,255 943,231 958,230C973,231 986,255 1000,305C1022,390 1040,465 1078,472C1110,465 1130,385 1160,381C1180,385 1190,412 1215,412C1270,405 1310,280 1340,210H1387C1420,290 1460,400 1494,440V745C1460,775 1445,810 1428,846H1286C1250,760 1215,665 1180,646C1150,642 1120,642 1105,646C1060,665 1030,780 980,846H922C890,800 860,775 843,752Z"],
  ["#9492c0", "M1090,472C1120,455 1140,433 1165,432C1190,434 1210,444 1240,425C1240,440 1200,464 1165,466C1140,468 1110,462 1090,472Z"],
  ["#64637a", "M843,522C872,478 898,390 917,328C932,282 944,264 958,263C973,265 985,290 998,330C1020,410 1040,466 1078,474C1110,465 1140,466 1165,467C1220,460 1250,430 1280,380C1310,300 1335,225 1362,215C1392,225 1420,330 1440,365C1465,410 1480,430 1494,442V560H843Z"],
  ["#918fb8", "M1165,545C1220,520 1255,440 1285,385C1315,290 1342,222 1363,220C1390,230 1415,320 1440,385C1465,440 1480,470 1494,500V556C1440,556 1400,545 1380,530C1365,500 1340,505 1300,514C1250,514 1200,530 1165,545Z"],
  ["#7c7b98", "M843,525C870,480 900,425 958,422C1020,425 1040,540 1110,537C1140,542 1150,545 1165,543C1200,530 1240,514 1300,514C1340,520 1345,550 1400,550C1440,552 1460,556 1494,556V625L1350,720L1180,628L900,640L843,625Z"],
  ["#5e5d70", "M1305,514C1335,504 1362,500 1380,520C1395,535 1410,550 1430,553C1390,550 1365,545 1350,535C1335,520 1325,515 1305,514Z"],
  ["#817fa1", "M1060,568C1090,555 1110,548 1130,555C1160,575 1180,610 1217,611C1250,608 1275,578 1303,577C1335,580 1350,618 1380,619C1430,612 1470,590 1494,577V606C1450,620 1400,735 1355,742C1300,735 1240,650 1185,628C1150,625 1100,600 1060,568Z"],
  ["#565466", "M843,608C880,592 900,630 945,630C980,625 1000,572 1040,572C1080,575 1110,610 1130,622C1170,625 1190,625 1210,645C1260,690 1310,738 1355,742C1400,735 1440,620 1494,604V640C1430,680 1400,815 1355,818C1300,810 1230,680 1190,635C1150,630 1120,635 1095,645C1050,670 1010,797 970,798C920,790 900,625 843,620Z"],
  ["#9c9bcb", "M843,622C900,620 925,790 970,798C1010,797 1050,690 1095,645C1060,680 1020,810 970,813C930,800 900,660 843,652Z"],
  ["#9c9bcb", "M1190,637C1240,690 1300,810 1355,818C1400,815 1440,680 1494,637V692C1450,720 1420,800 1402,846H1312C1270,750 1230,680 1190,637Z"],
  ["#716f8b", "M843,652C900,660 930,800 970,813C990,812 1010,795 1025,770C1005,810 985,838 960,840C920,835 890,765 843,752Z"],
  ["#9290b8", "M843,752C890,775 920,835 960,838Q975,838 988,832L980,846H922C890,800 860,775 843,752Z"],
  ["#686780", "M1494,692C1450,720 1420,800 1402,846H1428C1445,810 1460,775 1494,745Z"],
  ["#64637a", "M1150,642C1190,640 1240,720 1300,846H1286C1250,760 1215,665 1180,646Z"],
];

function Streamgraph() {
  return (
    <Thumb viewBox="0 0 798 636">
      <g transform="scale(1.2258 1) translate(-843 -210)" stroke="#8988a3" strokeWidth="1" strokeOpacity="0.6">
        {STREAMS.map(([fill, d]) => <path key={d} fill={fill} d={d} />)}
      </g>
    </Thumb>
  );
}

/* ---------- content ---------- */

const GALLERY = [
  [["Box Plots", BoxPlots], ["Bubble Chart", BubbleChart], ["Bullet Charts", BulletCharts], ["Calendar View", CalendarView]],
  [["Non-contiguous Cartogram", Cartogram], ["Chord Diagram", ChordDiagram], ["Dendrogram", Dendrogram], ["Force-Directed Graph", ForceGraph]],
  [["Circle Packing", CirclePacking], ["Population Pyramid", PopulationPyramid], ["Stacked Bars", StackedBars], ["Streamgraph", Streamgraph]],
];

const D3Logo = () => (
  <Logo viewBox="0 0 96 91" role="img" aria-label="D3">
    <clipPath id="d3-shape">
      <path d="M0,0h7.75a45.5,45.5 0 1 1 0,91h-7.75v-20h7.75a25.5,25.5 0 1 0 0,-51h-7.75zm36.2510,0h32a27.75,27.75 0 0 1 21.331,45.5a27.75,27.75 0 0 1 -21.331,45.5h-32a53.6895,53.6895 0 0 0 18.7464,-20h13.2526a7.75,7.75 0 1 0 0,-15.5h-7.75a53.6895,53.6895 0 0 0 0,-20h7.75a7.75,7.75 0 1 0 0,-15.5h-13.2526a53.6895,53.6895 0 0 0 -18.7464,-20z" />
    </clipPath>
    <linearGradient id="d3-a" gradientUnits="userSpaceOnUse" x1="7" y1="64" x2="50" y2="107">
      <stop offset="0" stopColor="#f9a03c" />
      <stop offset="1" stopColor="#f7974e" />
    </linearGradient>
    <linearGradient id="d3-b" gradientUnits="userSpaceOnUse" x1="2" y1="-2" x2="87" y2="84">
      <stop offset="0" stopColor="#f26d58" />
      <stop offset="1" stopColor="#f9a03c" />
    </linearGradient>
    <linearGradient id="d3-c" gradientUnits="userSpaceOnUse" x1="45" y1="-10" x2="108" y2="53">
      <stop offset="0" stopColor="#b84e51" />
      <stop offset="1" stopColor="#f68e48" />
    </linearGradient>
    <g clipPath="url(#d3-shape)">
      <path d="M-100,-102m-28,0v300h300z" fill="url(#d3-a)" />
      <path d="M-100,-102m28,0h300v300z" fill="url(#d3-c)" />
      <path d="M-100,-102l300,300" fill="none" stroke="url(#d3-b)" strokeWidth="40" />
    </g>
  </Logo>
);

const PencilIcon = () => (
  <svg viewBox="0 0 14 16" width="28" height="32" fill="currentColor" aria-hidden="true">
    <path fillRule="evenodd" d="M0 12v3h3l8-8-3-3-8 8zm3 2H1v-2h1v1h1v1zm10.3-9.3L12 6 9 3l1.3-1.3a.996.996 0 0 1 1.41 0l1.59 1.59c.39.39.39 1.02 0 1.41z" />
  </svg>
);

function LinkList({ items }) {
  return (
    <SideList>
      {items.map((t) => (
        <li key={t}><Link href="#">{t}</Link></li>
      ))}
    </SideList>
  );
}

export default function App() {
  return (
    <>
      <GlobalStyle />
      <Page>
        <Main>
          <Intro>
            Welcome to the <strong>D3 gallery</strong>! More examples are available on{" "}
            <Link href="#">bl.ocks.org/mbostock</Link>. If you want to share an example and don't have your own
            hosting, consider using <Link href="#">Gist</Link> and <Link href="#">bl.ocks.org</Link>. If you want to
            share or view live examples try <Link href="#">runnable.com</Link> or <Link href="#">vida.io</Link>.
          </Intro>
          <SectionTitle>Visual Index</SectionTitle>
          <Table>
            <colgroup>
              <FirstCol />
              <col />
              <col />
              <col />
            </colgroup>
            <tbody>
              {GALLERY.map((row) => (
                <Row key={row[0][0]}>
                  {row.map(([name, Drawing]) => (
                    <Cell key={name}>
                      <Entry>
                        {name}
                        <ThumbLink href="#" aria-label={name}><Drawing /></ThumbLink>
                      </Entry>
                    </Cell>
                  ))}
                </Row>
              ))}
              <Row>
                <Cell />
                <Cell />
                <Cell />
                <Cell />
              </Row>
            </tbody>
          </Table>
        </Main>
        <Aside>
          <PagesBoxEdge />
          <SideBox>
            <EditLink href="#" aria-label="Edit sidebar"><PencilIcon /></EditLink>
            <D3Logo />
            <SideTitle>Data-Driven Documents</SideTitle>
            <LinkList items={["Home", "Gallery", "Examples", "Tutorials", "Plugins"]} />
            <SideHeading>Help</SideHeading>
            <LinkList items={["D3.js on Stack Overflow", "D3.js Google Group", "D3.js on Gitter"]} />
            <SideHeading><Link href="#">API Reference</Link></SideHeading>
          </SideBox>
        </Aside>
      </Page>
    </>
  );
}
